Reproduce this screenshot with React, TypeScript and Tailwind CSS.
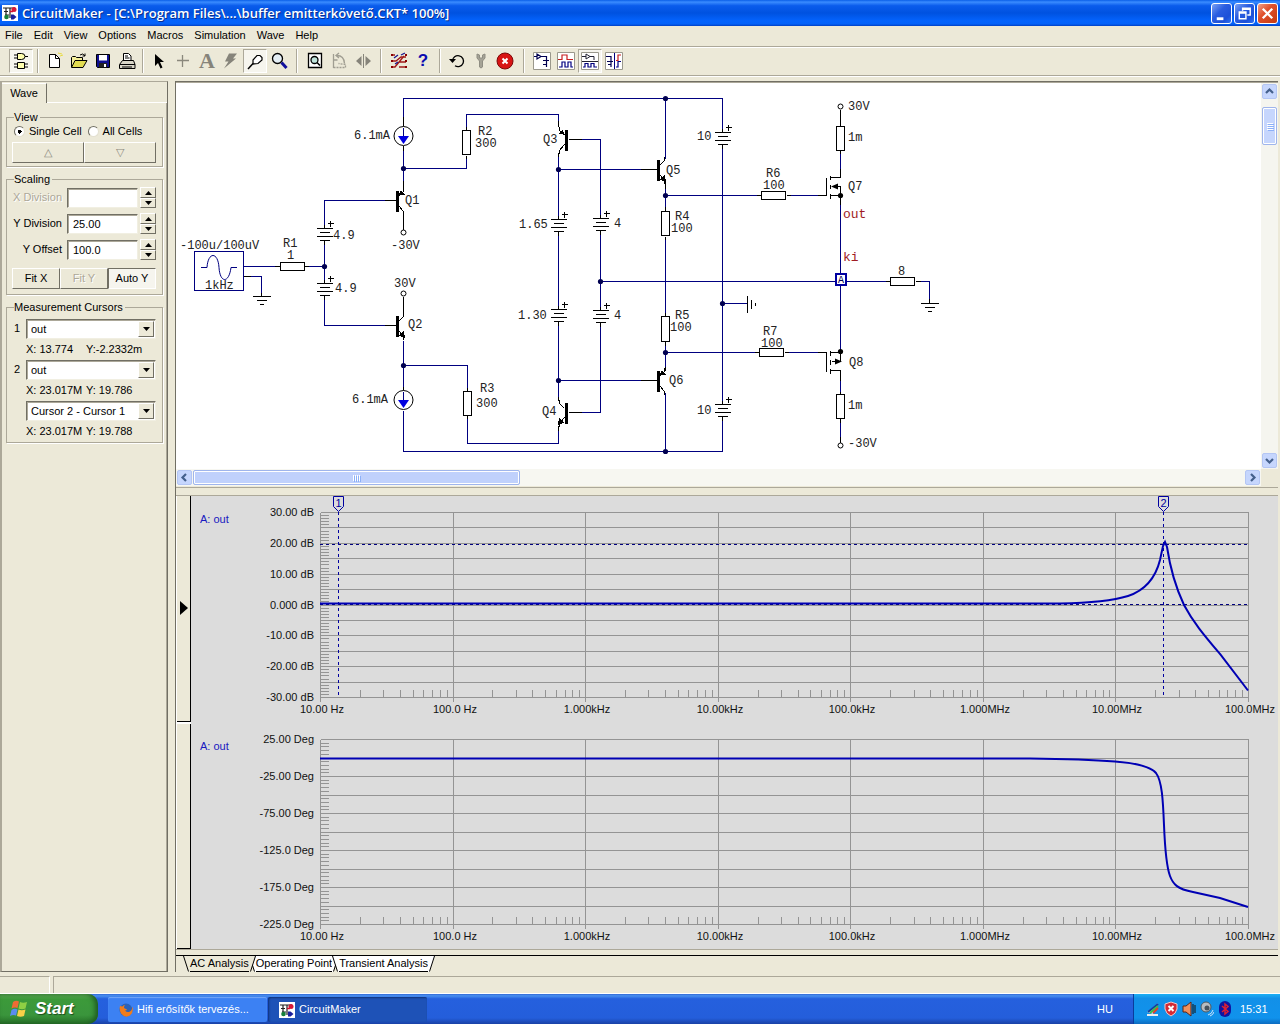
import type { ReactNode } from "react";
import clsx from "clsx";

const MENUS = ["File", "Edit", "View", "Options", "Macros", "Simulation", "Wave", "Help"];

const RAISED = "border border-t-white border-l-white border-r-[#716f64] border-b-[#716f64] bg-[#ece9d8]";
const SUNKEN = "border border-t-[#716f64] border-l-[#716f64] border-r-white border-b-white";
const SUNKEN_FIELD =
  "border border-t-[#716f64] border-l-[#716f64] border-r-[#f1efe2] border-b-[#f1efe2] shadow-[inset_1px_1px_0_#aca899] bg-white";

export default function App() {
  return (
    <div className="flex min-h-screen flex-col bg-[#ece9d8] font-['Liberation_Sans',Arial,sans-serif] text-[11px] leading-[13px] text-black">
      <TitleBar />
      <nav className="flex h-5 items-center gap-[11px] pb-0.5 pl-[5px]">
        {MENUS.map((m) => (
          <button key={m} type="button">
            {m}
          </button>
        ))}
      </nav>
      <Toolbar />
      <main className="flex min-h-0 flex-1 pr-0.5">
        <SidePanel />
        <div className="flex min-w-0 flex-1 flex-col border-t border-l border-[#716f64]">
          <SchematicPane />
          <div className="mt-px h-[9px] border-y border-[#aca899] bg-[#ece9d8]" />
          <GraphPane />
          <AnalysisTabs />
        </div>
      </main>
      <footer className="mt-1 flex h-[18px] gap-[3px] border-b border-white">
        <div className="w-[50px] border-t border-r border-t-[#aca899] border-r-white" />
        <div className="flex-1 border-t border-l border-[#aca899]" />
      </footer>
      <Taskbar />
    </div>
  );
}

/* ---------- title bar ---------- */

function TitleBar() {
  return (
    <header className="flex h-[26px] items-center bg-[linear-gradient(180deg,#0a5fe8_0%,#3a8cff_8%,#0a5cec_22%,#0052e0_50%,#0463fd_80%,#0462f8_92%,#0140c4_100%)] pr-0.5 pl-0.5">
      <AppLogo />
      <h1 className="ml-1 flex-1 font-['Open_Sans','Noto_Sans',sans-serif] text-[13px] font-semibold whitespace-pre text-white [text-shadow:1px_1px_0_#0b2f8f]">
        {"CircuitMaker - [C:\\Program Files\\...\\buffer emitterkövető.CKT* 100%]"}
      </h1>
      <div className="flex gap-0.5">
        <WindowButton label="Minimize">
          <path d="M5 14h7v3H5z" fill="#fff" />
        </WindowButton>
        <WindowButton label="Restore">
          <path d="M8 7V4.5h8v7h-3M8 5.5h8" fill="none" stroke="#fff" strokeWidth="1.5" />
          <path d="M4.500 8.500h7v7h-7zM4.500 9.500h7" fill="none" stroke="#fff" strokeWidth="1.500" />
        </WindowButton>
        <WindowButton label="Close" close>
          <path d="M5 5l10 10M15 5L5 15" stroke="#fff" strokeWidth="2.400" />
        </WindowButton>
      </div>
    </header>
  );
}

function WindowButton({ label, close, children }: { label: string; close?: boolean; children: ReactNode }) {
  return (
    <button
      type="button"
      aria-label={label}
      className={clsx(
        "h-[21px] w-[21px] rounded-[3px] border border-white",
        close
          ? "bg-[linear-gradient(135deg,#f0a088,#e0502c_40%,#c43a10)]"
          : "bg-[linear-gradient(135deg,#7ba2f4,#2a5de0_40%,#1c50d8_75%,#2f72f4)]",
      )}
    >
      <svg width="19" height="19" viewBox="0 0 20 20">
        {children}
      </svg>
    </button>
  );
}

function AppLogo() {
  return (
    <svg width="16" height="16" viewBox="0 0 16 16" className="shrink-0" aria-hidden="true">
      <rect width="16" height="16" fill="#fff" />
      <path d="M1 3h12M4 3v7M2 6.500h4M3 10h4M8 3v10" stroke="#222" strokeWidth="1.200" fill="none" />
      <path d="M8 6.500h3" stroke="#d01030" strokeWidth="1.500" />
      <circle cx="12" cy="4.500" r="2.500" fill="#d81838" />
      <circle cx="4.500" cy="12" r="2.300" fill="#16803c" />
      <path d="M9 9.500h2.500l3 2.500-3 2.500H9z" fill="#1a1f9c" />
    </svg>
  );
}

/* ---------- toolbar ---------- */

function Toolbar() {
  return (
    <div className="mb-[5px] flex h-[30px] items-center border-y border-[#aca899] pl-[9px] shadow-[inset_0_1px_0_#fff,0_1px_0_#fff]">
      <Tool label="Parts" on>
        <g fill="#ffffb0" stroke="#000">
          <path d="M5.500 1.500h4q3.500 0 3.500 3t-3.500 3h-4zM5.500 10.500h7v6h-7z" />
          <path d="M2 3h3M2 6h3M13 4.500h3M2 12h3M2 15h3M13 12h3M13 15h3" />
        </g>
      </Tool>
      <Sep className="w-[10px]" />
      <Tool label="New">
        <path d="M3.500 2.500h6l4 4v9h-10z" fill="#fff" stroke="#000" />
        <path d="M9.500 2.500v4h4" fill="none" stroke="#000" />
        <path d="M12 1l4 1M14 4l3-1" stroke="#e8dc40" />
      </Tool>
      <Tool label="Open">
        <path d="M1.500 15V5.500l1-1h3l1 1h6V8" fill="#f3ee9a" stroke="#000" />
        <path d="M1.500 15.500L5 8.500h12l-4 7z" fill="#e2dc50" stroke="#000" />
        <path d="M10 3q3-2.500 5 1M15 1.500V4h-2.500" fill="none" stroke="#000" />
      </Tool>
      <Tool label="Save">
        <path d="M2.500 2.500h13v13h-12l-1-1z" fill="#101090" stroke="#000" />
        <path d="M5 3h8v5.500H5z" fill="#fff" />
        <path d="M5 11h8v4.500H5z" fill="#222" />
        <path d="M10 12h2v3h-2z" fill="#fff" />
      </Tool>
      <Tool label="Print">
        <path d="M5.500 9V1.500h5l2.500 2.500v5" fill="#fff" stroke="#000" />
        <path d="M7 4h3M7 6h4.500" stroke="#000" />
        <path d="M1.500 12.500l3-4h11l1.500 4v4h-15.500z" fill="#d9d6c8" stroke="#000" />
        <path d="M2 12.500h15M4 15h10" stroke="#000" />
      </Tool>
      <Sep className="w-2" />
      <Tool label="Arrow">
        <path d="M5 2v12l3-3 2.500 5.500 2-1L10 10h4z" fill="#000" />
      </Tool>
      <Tool label="Wire">
        <path d="M8.500 3v12M3 8.500h12" stroke="#8a887c" strokeWidth="1.300" />
      </Tool>
      <button
        type="button"
        aria-label="Text"
        className="h-6 w-6 font-['Liberation_Serif',serif] text-[22px] leading-6 font-bold text-[#86847a]"
      >
        A
      </button>
      <Tool label="Delete">
        <path d="M7 1.500h8l-4 5H14L2 16.500l4.500-7H3z" fill="#86847a" />
      </Tool>
      <Tool label="Probe" on>
        <path d="M7 12V8l4-4.500h3l2 2V8l-4 3.500z" fill="#fff" stroke="#000" strokeWidth="1.200" />
        <path d="M2 17l5-5.500" stroke="#000" strokeWidth="1.500" />
      </Tool>
      <Tool label="Zoom">
        <circle cx="7.500" cy="6.500" r="5" fill="#e4eef4" stroke="#000" strokeWidth="1.300" />
        <path d="M11.500 10.500l5 5.500" stroke="#10109c" strokeWidth="3" />
      </Tool>
      <Sep className="w-3" />
      <Tool label="Fit to window">
        <path d="M2.500 1.500h13v14h-13z" fill="#fff" stroke="#000" strokeWidth="1.300" />
        <circle cx="8.500" cy="8" r="3.500" fill="#bfe4dc" stroke="#000" strokeWidth="1.300" />
        <path d="M11 10.500l3 3" stroke="#000" strokeWidth="1.600" />
      </Tool>
      <Tool label="Rotate">
        <path d="M3.500 2v14M3.500 8h4" fill="none" stroke="#a09e92" strokeWidth="1.300" />
        <path d="M3.500 15.500h12v-3l-7-1" fill="none" stroke="#a09e92" strokeWidth="1.300" strokeDasharray="2 1" />
        <path d="M7 3.500q7 0 7.500 8M9 1L6 3.500 9 6" fill="none" stroke="#a09e92" strokeWidth="1.300" />
      </Tool>
      <Tool label="Mirror">
        <path d="M9.500 2v14" stroke="#86847a" />
        <path d="M7.500 4v10L2 9zM11.500 4v10L17 9z" fill="#86847a" />
      </Tool>
      <Sep className="w-3" />
      <Tool label="Digital trace">
        <path d="M2 3h3M2 9h4l5-4h5M2 15h3l9-11M5 15l3-4M9 10h7M9 15h7" fill="none" stroke="#a01818" strokeWidth="1.300" />
        <path d="M4 6l4-3M11 3l4-2M5 12l3-2" stroke="#181890" strokeWidth="1.300" />
        <path d="M1 2h2v2H1zM1 8h2v2H1zM1 14h2v2H1zM15 2h2v2h-2zM15 8h2v2h-2zM15 14h2v2h-2z" fill="#800" />
      </Tool>
      <button type="button" aria-label="Help" className="h-6 w-6 text-[17px] leading-6 font-bold text-[#0b0bb0]">
        ?
      </button>
      <Sep className="w-[10px]" />
      <Tool label="Reset">
        <path d="M4.500 9a5.500 5.500 0 1 1 2.500 4.800" fill="none" stroke="#000" strokeWidth="1.300" />
        <path d="M1 7h7l-3.500 4z" fill="#000" />
      </Tool>
      <Tool label="Step">
        <path d="M5 2v4l2.500 3v6q1.500 2 3 0V9L13 6V2l-2.500 1v3h-3V3z" fill="#a5a396" stroke="#8f8d82" />
      </Tool>
      <Tool label="Stop">
        <circle cx="9" cy="9" r="8" fill="#d81414" stroke="#7c0808" />
        <path d="M6.500 6.500l5 5M11.500 6.500l-5 5" stroke="#fff" strokeWidth="2" />
      </Tool>
      <Sep className="w-[13px]" />
      <Tool label="Schematic view">
        <Frame />
        <path d="M1 4.500h3M4 2v5l4-2.500zM8 4.500h5.500v4M10 8.500h6M13.500 9v6M10 12.500h4" fill="none" stroke="#000050" strokeWidth="1.200" />
      </Tool>
      <Tool label="Waveform view">
        <Frame />
        <path d="M1 7.500h4V3h5v4.500h6" fill="none" stroke="#c81e1e" strokeWidth="1.200" />
        <path d="M2 15h3v-5h3v5h3v-5h3v5h2" fill="none" stroke="#000080" strokeWidth="1.200" />
      </Tool>
      <Tool label="Split horizontal" on>
        <Frame />
        <path d="M1 4.500h4M5 2v5l4-2.500zM9 4.500h4V8M1 9.500h16" fill="none" stroke="#223" />
        <path d="M2 15h2v-3.500h3V15h3v-3.500h3V15h3" fill="none" stroke="#000080" strokeWidth="1.200" />
      </Tool>
      <Tool label="Split vertical">
        <Frame />
        <path d="M1 4.500h5V9M2 9.500h6M6 10v5M3 12.500h3" fill="none" stroke="#000050" strokeWidth="1.200" />
        <path d="M9.500 1v16" stroke="#000080" />
        <path d="M11 8.500h2V3h3" fill="none" stroke="#c81e1e" strokeWidth="1.200" />
        <path d="M11 15h2V9.500h3" fill="none" stroke="#000080" strokeWidth="1.200" />
      </Tool>
    </div>
  );
}

function Frame() {
  return <path d="M.5.5h17v17H.5z" fill="#fff" stroke="#9a988c" />;
}

function Tool({ label, on, children }: { label: string; on?: boolean; children: ReactNode }) {
  return (
    <button
      type="button"
      aria-label={label}
      aria-pressed={on}
      className={clsx(
        "flex h-6 w-6 items-center justify-center border",
        on ? "border-t-[#aca899] border-l-[#aca899] border-r-white border-b-white bg-[#f6f5ee]" : "border-transparent",
      )}
    >
      <svg width="18" height="18" viewBox="0 0 18 18" className="shrink-0">
        {children}
      </svg>
    </button>
  );
}

function Sep({ className }: { className: string }) {
  return (
    <div className={clsx("flex justify-center", className)}>
      <div className="h-6 w-0.5 border-r border-l border-l-[#aca899] border-r-white" />
    </div>
  );
}

/* ---------- side panel ---------- */

function SidePanel() {
  return (
    <aside className="mr-[7px] flex w-[168px] shrink-0 flex-col border-t border-r border-b border-l-2 border-t-[#aca899] border-r-[#716f64] border-b-[#716f64] border-l-[#aca899]">
      <div className="flex">
        <button type="button" className="mt-px h-5 w-[45px] border-t border-r border-t-white border-r-[#716f64] text-center">
          Wave
        </button>
        <div className="flex-1 border-b border-white" />
      </div>
      <div className="flex flex-1 flex-col gap-1.5 border-r border-[#aca899] pt-2 pr-[3px] pl-1">
        <Group title="View" className="h-14">
          <div className="flex items-center gap-1.5 pt-px pl-0.5">
            <RadioOption label="Single Cell" defaultChecked />
            <RadioOption label="All Cells" />
          </div>
          <div className="mt-1 flex pr-1.5">
            <button type="button" aria-label="Previous cell" className={clsx(RAISED, "h-[21px] flex-1 text-[#8a887c]")}>
              △
            </button>
            <button type="button" aria-label="Next cell" className={clsx(RAISED, "h-[21px] flex-1 text-[#8a887c]")}>
              ▽
            </button>
          </div>
        </Group>
        <Group title="Scaling" className="h-[122px]">
          <div className="flex flex-col gap-[5px] pt-px">
            <SpinRow id="x-division" label="X Division" value="" disabled />
            <SpinRow id="y-division" label="Y Division" value="25.00" />
            <SpinRow id="y-offset" label="Y Offset" value="100.0" />
          </div>
          <div className="mt-2 flex pr-1.5">
            <button type="button" className={clsx(RAISED, "h-[21px] flex-1")}>
              Fit X
            </button>
            <button type="button" disabled className={clsx(RAISED, "h-[21px] flex-1 text-[#aca899] [text-shadow:1px_1px_0_#fff]")}>
              Fit Y
            </button>
            <button type="button" aria-pressed="true" className={clsx(SUNKEN, "h-[21px] flex-1 bg-[#f6f5ee]")}>
              Auto Y
            </button>
          </div>
        </Group>
        <Group title="Measurement Cursors" className="h-[142px]">
          <div className="flex flex-col gap-1 pt-[5px]">
            <CursorRow number="1" value="out" label="Cursor 1" readout={["X: 13.774", "Y:-2.2332m"]} />
            <CursorRow number="2" value="out" label="Cursor 2" readout={["X: 23.017M", "Y: 19.786"]} />
            <CursorRow number="" value="Cursor 2 - Cursor 1" label="Difference" readout={["X: 23.017M", "Y: 19.788"]} />
          </div>
        </Group>
      </div>
    </aside>
  );
}

function Group({ title, className, children }: { title: string; className: string; children: ReactNode }) {
  return (
    <fieldset className={clsx("min-w-0 border border-[#aca899] pl-[5px] shadow-[1px_1px_0_#fff]", className)}>
      <legend className="ml-0.5 pr-0.5">{title}</legend>
      {children}
    </fieldset>
  );
}

function RadioOption({ label, defaultChecked }: { label: string; defaultChecked?: boolean }) {
  return (
    <label className="flex items-center gap-1 whitespace-nowrap">
      <input
        type="radio"
        name="cells"
        defaultChecked={defaultChecked}
        className="h-[11px] w-[11px] appearance-none rounded-full border border-t-[#716f64] border-l-[#716f64] border-r-[#e3e0d0] border-b-[#e3e0d0] bg-white checked:bg-[radial-gradient(circle,#000_2px,#fff_2px)]"
      />
      {label}
    </label>
  );
}

function SpinRow({ id, label, value, disabled }: { id: string; label: string; value: string; disabled?: boolean }) {
  return (
    <div className="flex h-[21px] items-center pr-1.5">
      <label
        htmlFor={id}
        className={clsx("w-[50px] text-right whitespace-nowrap", disabled && "text-[#aca899] [text-shadow:1px_1px_0_#fff]")}
      >
        {label}
      </label>
      <input id={id} defaultValue={value} className={clsx(SUNKEN_FIELD, "ml-[5px] h-5 min-w-0 flex-1 px-[5px]")} />
      <div className="ml-0.5 flex w-4 flex-col">
        <button type="button" aria-label={label + " up"} className={clsx(RAISED, "flex h-[11px] items-center justify-center")}>
          <svg width="7" height="4">
            <path d="M0 4L3.500 0 7 4z" />
          </svg>
        </button>
        <button type="button" aria-label={label + " down"} className={clsx(RAISED, "flex h-[10px] items-center justify-center")}>
          <svg width="7" height="4">
            <path d="M0 0h7L3.500 4z" />
          </svg>
        </button>
      </div>
    </div>
  );
}

function CursorRow({ number, value, label, readout }: { number: string; value: string; label: string; readout: string[] }) {
  return (
    <div className="grid grid-cols-[12px_1fr] pr-1.5 pl-0.5">
      <span className="pt-[3px]">{number}</span>
      <div className="relative">
        <select aria-label={label} className={clsx(SUNKEN_FIELD, "h-5 w-full appearance-none px-1")} defaultValue={value}>
          <option>{value}</option>
        </select>
        <span className={clsx(RAISED, "pointer-events-none absolute top-0.5 right-0.5 flex h-4 w-4 items-center justify-center")}>
          <svg width="7" height="4">
            <path d="M0 0h7L3.500 4z" />
          </svg>
        </span>
      </div>
      <span />
      <div className="mt-1 flex whitespace-nowrap">
        <span className="w-[60px]">{readout[0]}</span>
        <span>{readout[1]}</span>
      </div>
    </div>
  );
}

/* ---------- schematic ---------- */

function SchematicPane() {
  return (
    <section aria-label="Schematic" className="grid grid-cols-[1fr_17px] grid-rows-[386px_17px] border-t border-[#aca899]">
      <div className="min-w-0 overflow-hidden bg-white">
        <Schematic />
      </div>
      <div className="flex flex-col bg-[#f5f5ef] p-px">
        <ScrollButton label="Scroll up" d="M4 9l3.500-3.500L11 9" />
        <div className="mt-2 flex h-[38px] flex-col items-center justify-center gap-px rounded-xs border border-[#9fb5ec] bg-[#c6d6fd] shadow-[inset_0_0_0_1px_#fff]">
          <Grip className="h-px w-1.5" />
        </div>
        <div className="flex-1" />
        <ScrollButton label="Scroll down" d="M4 6l3.500 3.500L11 6" />
      </div>
      <div className="flex bg-[#f7f7f1] p-px">
        <ScrollButton label="Scroll left" d="M9 4L5.500 7.500 9 11" />
        <div className="ml-px flex w-[30.200%] items-center justify-center gap-px rounded-xs border border-[#9fb5ec] bg-[#c0d1fc] shadow-[inset_0_0_0_1px_#fff]">
          <Grip className="h-1.5 w-px" />
        </div>
        <div className="flex-1" />
        <ScrollButton label="Scroll right" d="M6 4l3.500 3.500L6 11" />
      </div>
      <div className="bg-[#ece9d8]" />
    </section>
  );
}

function Grip({ className }: { className: string }) {
  return (
    <>
      {[0, 1, 2, 3].map((i) => (
        <span key={i} className={clsx("bg-white shadow-[1px_1px_0_#8cb0f8]", className)} />
      ))}
    </>
  );
}

function ScrollButton({ label, d }: { label: string; d: string }) {
  return (
    <button type="button" aria-label={label} className="h-[15px] w-[15px] shrink-0 rounded-xs border border-[#b4c6f4] bg-[#c6d6fd]">
      <svg width="13" height="13" viewBox="1 1 13 13">
        <path d={d} fill="none" stroke="#44608c" strokeWidth="2.200" />
      </svg>
    </button>
  );
}

const WIRES = [
  "M403 126V98H722V132", "M403 145V190", "M403 168H466V155", "M466 130V114H558V126",
  "M243 266H280", "M304 266H324", "M324 228V200H384", "M324 240V283", "M324 296V325H384",
  "M243 276H261V296", "M403 340V390", "M403 365H467V391", "M467 415V443H558V428", "M403 410V451H722V417",
  "M558 154V219", "M558 169H648", "M558 232V309", "M558 322V400", "M558 380H648",
  "M580 139H600V218", "M600 230V310", "M600 323V412H580", "M600 281H890", "M665 98V158",
  "M665 182V211", "M665 195H761", "M665 236V316", "M665 341V366", "M665 352H759", "M665 392V451",
  "M722 144V404", "M722 303H747", "M786 195H817", "M784 352H817", "M840 150V168", "M840 195V352",
  "M840 378V394", "M840 418V436", "M915 281H929V303",
];

const STUBS = [
  "M403 116V126M403 190V180M403 232V212M403 296V313M403 145V150M384 200H395M384 325H395",
  "M274 266H280M304 266H308M243 276H250M261 292V296M466 155V158M466 126V130",
  "M403 390V386M467 387V391M467 415V418M558 120V126M558 152V156M568 139H581M568 412H581M558 425V430M558 400V396",
  "M640 169H656M640 380H656M665 181V188M665 206V211M665 236V239M665 312V316M665 341V345M665 366V370",
  "M756 195H761M786 195H790M754 352H759M784 352H788M817 195H826V177M817 352H826V371",
  "M840 109V126M840 150V153M840 168V177H830M830 195H840V186H831M840 195V204M830 352H840V361H831M830 370H840V380",
  "M830 175V179M830 184V188M830 193V198M830 350V355M830 359V364M830 368V373",
  "M840 391V394M840 418V422M840 436V442M885 281H890M915 281H920M929 298V303",
];

// x, y of the uppermost plate
const BATTERIES = [[324, 228], [324, 283], [558, 219], [558, 309], [600, 218], [600, 310], [722, 132], [722, 404]];

// x, y, width, height
const RESISTORS = [
  [280, 262, 24, 8], [462, 130, 8, 24], [463, 391, 8, 24], [661, 211, 8, 24], [661, 316, 8, 25],
  [761, 191, 24, 8], [759, 348, 24, 8], [836, 126, 8, 24], [836, 394, 8, 24], [890, 277, 24, 8],
];

const NODES = [
  [324, 266], [403, 168], [403, 365], [558, 169], [558, 380], [600, 281],
  [665, 98], [665, 195], [665, 352], [665, 451], [722, 303],
];

const LABELS: [number, number, string][] = [
  [180, 249, "-100u/100uV"], [283, 247, "R1"], [287, 259, "1"], [205, 289, "1kHz"], [333, 239, "4.9"], [335, 292, "4.9"],
  [354, 139, "6.1mA"], [352, 403, "6.1mA"], [405, 204, "Q1"], [408, 328, "Q2"], [391, 249, "-30V"], [394, 287, "30V"],
  [478, 135, "R2"], [475, 147, "300"], [480, 392, "R3"], [476, 407, "300"], [543, 143, "Q3"], [542, 415, "Q4"],
  [519, 228, "1.65"], [518, 319, "1.30"], [614, 227, "4"], [614, 319, "4"], [666, 174, "Q5"], [669, 384, "Q6"],
  [675, 220, "R4"], [671, 232, "100"], [675, 319, "R5"], [670, 331, "100"], [697, 140, "10"], [697, 414, "10"],
  [766, 177, "R6"], [763, 189, "100"], [763, 335, "R7"], [761, 347, "100"], [848, 110, "30V"], [848, 141, "1m"],
  [848, 190, "Q7"], [849, 366, "Q8"], [848, 409, "1m"], [848, 447, "-30V"], [898, 275, "8"],
];

function Schematic() {
  return (
    <svg width="1085" height="386" viewBox="176 83 1085 386" fill="none" className="max-w-none">
      <g transform="translate(.5 .5)" shapeRendering="crispEdges">
        <path d={WIRES.join("")} stroke="#000080" />
        <path d={STUBS.join("")} stroke="#000" />
        <path d="M194 251h49v39h-49z" stroke="#000080" />
        {BATTERIES.map(([x, y]) => (
          <g key={x + "-" + y} stroke="#000">
            <path d={`M${x - 8} ${y}h16M${x - 5} ${y + 4}h10M${x - 8} ${y + 8}h16M${x - 5} ${y + 12}h10M${x} ${y}v-4M${x} ${y + 12}v4`} />
            <path d={`M${x + 3} ${y - 5}h6M${x + 6} ${y - 8}v6`} />
          </g>
        ))}
        {RESISTORS.map(([x, y, w, h]) => (
          <rect key={x + "-" + y} x={x} y={y} width={w} height={h} fill="#fff" stroke="#000" />
        ))}
        {/* grounds */}
        <path
          d="M252 296h18M256 300h10M259 304h4M920 303h18M924 307h10M927 311h4M747 295v17M751 299v9M755 302v3"
          stroke="#000"
        />
        <Transistor x={395} y={190} arrow="top" />
        <Transistor x={395} y={315} arrow="bottom" />
        <Transistor x={656} y={159} arrow="bottom" />
        <Transistor x={656} y={370} arrow="top" />
        <Transistor x={567} y={129} arrow="top" flip />
        <Transistor x={567} y={402} arrow="bottom" flip />
      </g>
      <path d="M201 267.500h6c1-16 11-16 12 0s10 16 12 0h6" stroke="#000080" />
      {[136, 400].map((y) => (
        <g key={y}>
          <circle cx="403.500" cy={y} r="9.500" fill="#fff" stroke="#000" />
          <path d={`M403.500 ${y - 8}v8`} stroke="#000080" />
          <path d={`M398 ${y}h11l-5.500 8z`} fill="#0000e0" />
        </g>
      ))}
      {[[403, 232], [403, 293], [840, 106], [840, 445]].map(([x, y]) => (
        <circle key={x + "-" + y} cx={x + 0.5} cy={y + 0.5} r="2.500" fill="#fff" stroke="#000" />
      ))}
      {NODES.map(([x, y]) => (
        <circle key={x + "-" + y} cx={x + 0.5} cy={y + 0.5} r="2.600" fill="#000050" />
      ))}
      <path d="M831 186.500l7-3v6zM842 361.500l-7-3v6z" fill="#000" />
      <circle cx="840.500" cy="195.500" r="2.600" fill="#000" />
      <circle cx="840.500" cy="351.500" r="2.600" fill="#000" />
      <rect x="836" y="274" width="10" height="11" fill="#fff" stroke="#0000a0" strokeWidth="2" />
      <g className="fill-[#222] font-['Liberation_Mono',monospace] text-[12px]">
        {LABELS.map(([x, y, text]) => (
          <text key={x + "-" + y} x={x} y={y}>
            {text}
          </text>
        ))}
        <text x="838" y="283" className="fill-[#000050] text-[10px]">
          A
        </text>
        <g className="fill-[#a01c24] text-[13px]">
          <text x="843" y="218">out</text>
          <text x="843" y="261">ki</text>
        </g>
      </g>
    </svg>
  );
}

function Transistor({ x, y, arrow, flip }: { x: number; y: number; arrow: "top" | "bottom"; flip?: boolean }) {
  return (
    <g transform={`translate(${x} ${y}) scale(${flip ? -1 : 1} 1)`}>
      <path d="M0 0h3v21H0z" fill="#000" />
      <path d="M3 6l5-5V-3M3 15l5 6v3" stroke="#000" />
      {arrow === "top" ? <path d="M3 5l6-1-4-4z" fill="#000" /> : <path d="M9 22l-1-6-4 4z" fill="#000" stroke="#000" />}
    </g>
  );
}

/* ---------- graphs ---------- */

const FREQS = ["10.00 Hz", "100.0 Hz", "1.000kHz", "10.00kHz", "100.0kHz", "1.000MHz", "10.00MHz", "100.0MHz"];
const DECIBELS = ["30.00 dB", "20.00 dB", "10.00 dB", "0.000 dB", "-10.00 dB", "-20.00 dB", "-30.00 dB"];
const DEGREES = ["25.00 Deg", "-25.00 Deg", "-75.00 Deg", "-125.0 Deg", "-175.0 Deg", "-225.0 Deg"];

const LEFT = 320;
const PLOT_W = 928;
const PLOT_H = 185;
const DECADE = PLOT_W / 7;

const GAIN =
  "M320 603.500H1060C1090 603 1112 601 1128 596C1143 591 1155 580 1160 560L1163 546L1165 542L1167 547C1170 567 1175 586 1184 605C1193 622 1204 635 1220 654L1248 690.500";
const PHASE =
  "M320 758.500H1030C1070 759 1095 760 1115 761.500C1135 763 1150 766 1156 773C1162 781 1163 800 1164 825C1165 850 1167 868 1170 876C1173 884 1177 889 1193 892L1220 898L1248 907";

function GraphPane() {
  return (
    <section aria-label="Graphs" className="flex h-[454px] overflow-hidden border-b border-[#aca899] bg-[#dcdcdc]">
      <div className="flex w-[15px] shrink-0 flex-col gap-0.5 bg-white pl-px">
        <div className="flex flex-1 items-center justify-center border-r border-b border-black bg-[#ece9d8]">
          <svg width="8" height="14">
            <path d="M0 0l8 7-8 7z" />
          </svg>
        </div>
        <div className="flex-1 border-r border-b border-black bg-[#ece9d8]" />
      </div>
      <svg width="1087" height="453" viewBox="191 496 1087 453" fill="none" className="max-w-none shrink-0 text-[11px]">
        <Grid top={512} rows={12} minor={60} labels={DECIBELS} />
        <Grid top={739} rows={10} minor={50} labels={DEGREES} />
        <path d="M320 544.500H1248M320 604.500H1248" stroke="#000080" strokeDasharray="3 3" shapeRendering="crispEdges" />
        <path d="M338.500 512V697M1163.500 512V697" stroke="#0000a0" strokeDasharray="3 3" shapeRendering="crispEdges" />
        <path d={GAIN} stroke="#0000b4" strokeWidth="2" />
        <path d={PHASE} stroke="#0000b4" strokeWidth="2" />
        <CursorTag x={338} label="1" />
        <CursorTag x={1163} label="2" />
      </svg>
    </section>
  );
}

function Grid({ top, rows, minor, labels }: { top: number; rows: number; minor: number; labels: string[] }) {
  let lines = "";
  for (let i = 0; i <= rows; i++) lines += `M${LEFT} ${Math.round(top + (i * PLOT_H) / rows)}h${PLOT_W}`;
  for (let i = 0; i <= minor; i++) lines += `M${LEFT} ${Math.round(top + (i * PLOT_H) / minor)}h8`;
  for (let d = 0; d <= 7; d++) {
    lines += `M${Math.round(LEFT + d * DECADE)} ${top}v${PLOT_H + 4}`;
    if (d === 7) break;
    for (let n = 2; n < 10; n++) {
      lines += `M${Math.round(LEFT + (d + Math.log10(n)) * DECADE)} ${top + PLOT_H}v-8`;
    }
  }
  return (
    <g>
      <path d={lines} stroke="#949494" shapeRendering="crispEdges" transform="translate(.5 .5)" />
      <text x="200" y={top + 11} className="fill-[#1818c0]">
        A: out
      </text>
      <g className="fill-[#111]">
        {labels.map((label, i) => (
          <text key={label} x="314" y={Math.round(top + 4 + (i * PLOT_H) / (labels.length - 1))} textAnchor="end">
            {label}
          </text>
        ))}
        {FREQS.map((label, i) => (
          <text key={label} x={Math.round(LEFT + 2 + i * DECADE)} y={top + 201} textAnchor="middle">
            {label}
          </text>
        ))}
      </g>
    </g>
  );
}

function CursorTag({ x, label }: { x: number; label: string }) {
  return (
    <g>
      <path d={`M${x - 4.5} 496.500h10v10l-5 5-5-5z`} stroke="#0000a0" />
      <text x={x + 0.5} y="507" textAnchor="middle" className="fill-[#0000a0]">
        {label}
      </text>
    </g>
  );
}

const TABS = ["AC Analysis", "Operating Point", "Transient Analysis"];

function AnalysisTabs() {
  return (
    <div className="mt-[5px] flex border-t border-black pl-[7px]">
      {TABS.map((tab, i) => (
        <button key={tab} type="button" className={clsx("flex h-4", i > 0 ? "-ml-[7px]" : "relative z-10")}>
          <TabEdge d="M.5 0l5 15.500" area="M0 0h7v16H6z" active={i === 0} />
          <span className={clsx("h-4 border-b border-black pt-px", i === 0 ? "bg-[#ece9d8]" : "bg-white")}>{tab}</span>
          <TabEdge d="M6.500 0l-5 15.500" area="M0 0h7L1 16H0z" active={i === 0} />
        </button>
      ))}
    </div>
  );
}

function TabEdge({ d, area, active }: { d: string; area: string; active: boolean }) {
  return (
    <svg width="7" height="16" className="shrink-0" aria-hidden="true">
      <path d={area} fill={active ? "#ece9d8" : "#fff"} />
      <path d={d} stroke="#000" />
    </svg>
  );
}

/* ---------- taskbar ---------- */

function Taskbar() {
  return (
    <div className="flex h-[30px] items-stretch bg-[linear-gradient(180deg,#3168d5_0%,#4990f0_6%,#2560de_16%,#245edb_80%,#1941a5_100%)] text-white">
      <button
        type="button"
        className="mr-2.5 flex w-[98px] items-center rounded-r-[10px] bg-[linear-gradient(180deg,#5eac56_0%,#3c9a3a_18%,#3a953c_70%,#267028_100%)] pl-[10px] shadow-[inset_-3px_0_5px_#1f5c20]"
      >
        <svg width="19" height="18" viewBox="0 0 19 18" aria-hidden="true">
          <path d="M3 2q3-2 6-.5L7.500 8Q4.500 7 1.500 8.500z" fill="#ee6b35" />
          <path d="M10 2q3 1.500 7 0l-1.500 6.500q-3.500 1.500-7 0z" fill="#8fd044" />
          <path d="M1.500 10q3-2 6-.5L6 15.500Q3 14.500 0 16z" fill="#5a8cf0" />
          <path d="M8.500 9.500q3 1.500 7 0L14 16q-3.500 1.500-7 0z" fill="#f8d048" />
        </svg>
        <span className="ml-1.5 text-[17px] leading-5 font-bold italic [text-shadow:1px_1px_1px_#1b4d1c]">Start</span>
      </button>
      <TaskButton label="Hifi erősítők tervezés...">
        <svg width="14" height="14" viewBox="0 0 14 14" aria-hidden="true">
          <circle cx="7" cy="7" r="6.500" fill="#2b62b8" />
          <path d="M1 3q-1 4 1 7.500 4 5 9 2 4-3.500 2.500-9-.5 4-2.500 5-3 1.500-5-1 2 0 2-1L5 5q0-2 1-3-2 0-2.500 1.500Q2 3 1 3z" fill="#f07c1c" />
        </svg>
      </TaskButton>
      <TaskButton label="CircuitMaker" active>
        <AppLogo />
      </TaskButton>
      <div className="flex-1" />
      <span className="mr-5 self-center">HU</span>
      <div className="flex w-[147px] items-center gap-1 border-l border-[#0a3c9c] bg-[linear-gradient(180deg,#1cb0f4_0%,#1290e8_15%,#1092ec_80%,#0d6cc0_100%)] pl-3">
        <TrayIcons />
        <time className="ml-1">15:31</time>
      </div>
    </div>
  );
}

function TaskButton({ label, active, children }: { label: string; active?: boolean; children: ReactNode }) {
  return (
    <button
      type="button"
      className={clsx(
        "mt-[3px] mr-px mb-0.5 flex w-[159px] items-center gap-1 rounded-xs pl-[11px] text-left",
        active ? "bg-[#1e52b7] shadow-[inset_1px_1px_2px_#0f3278]" : "bg-[#3c81f3] shadow-[inset_0_1px_1px_#73a6f8]",
      )}
    >
      {children}
      <span className="truncate">{label}</span>
    </button>
  );
}

function TrayIcons() {
  return (
    <>
      <svg width="14" height="16" viewBox="0 0 14 16" aria-label="Display settings">
        <path d="M1 11l11-9-5 11z" fill="#ddd" />
        <path d="M2 11l10-8" stroke="#103ca0" strokeWidth="2" />
        <path d="M4 12l8-7" stroke="#38c048" strokeWidth="2" />
        <path d="M7 12l5-5" stroke="#e0402c" strokeWidth="2" />
        <path d="M1 14h11" stroke="#eee" strokeWidth="2" />
      </svg>
      <svg width="14" height="16" viewBox="0 0 14 16" aria-label="Security alert">
        <path d="M7 1l6 2v5q-1 5-6 7-5-2-6-7V3z" fill="#d42a34" stroke="#f0c8c8" />
        <path d="M4.500 5l5 5M9.500 5l-5 5" stroke="#fff" strokeWidth="2" />
      </svg>
      <svg width="14" height="16" viewBox="0 0 14 16" aria-label="Sound">
        <path d="M1 5h3l5-4v14l-5-4H1z" fill="#f0905c" stroke="#5c2414" />
        <path d="M11 3v10M13 4v8" stroke="#111" />
      </svg>
      <svg width="14" height="16" viewBox="0 0 14 16" aria-label="Volume">
        <circle cx="6" cy="6" r="5" fill="#b8bcc0" stroke="#4c5860" />
        <circle cx="7" cy="7" r="2.500" fill="#46525c" />
        <path d="M8 14q4-1 5-5M10 15q3-1 4-4" fill="none" stroke="#cfe4f8" />
      </svg>
      <svg width="14" height="16" viewBox="0 0 14 16" aria-label="Bluetooth">
        <rect x="1" y="0" width="12" height="16" rx="6" fill="#1014a0" />
        <path d="M4 5l6 5.500L7 13V3l3 2.500L4 11" fill="none" stroke="#e02030" strokeWidth="1.500" />
      </svg>
    </>
  );
}
